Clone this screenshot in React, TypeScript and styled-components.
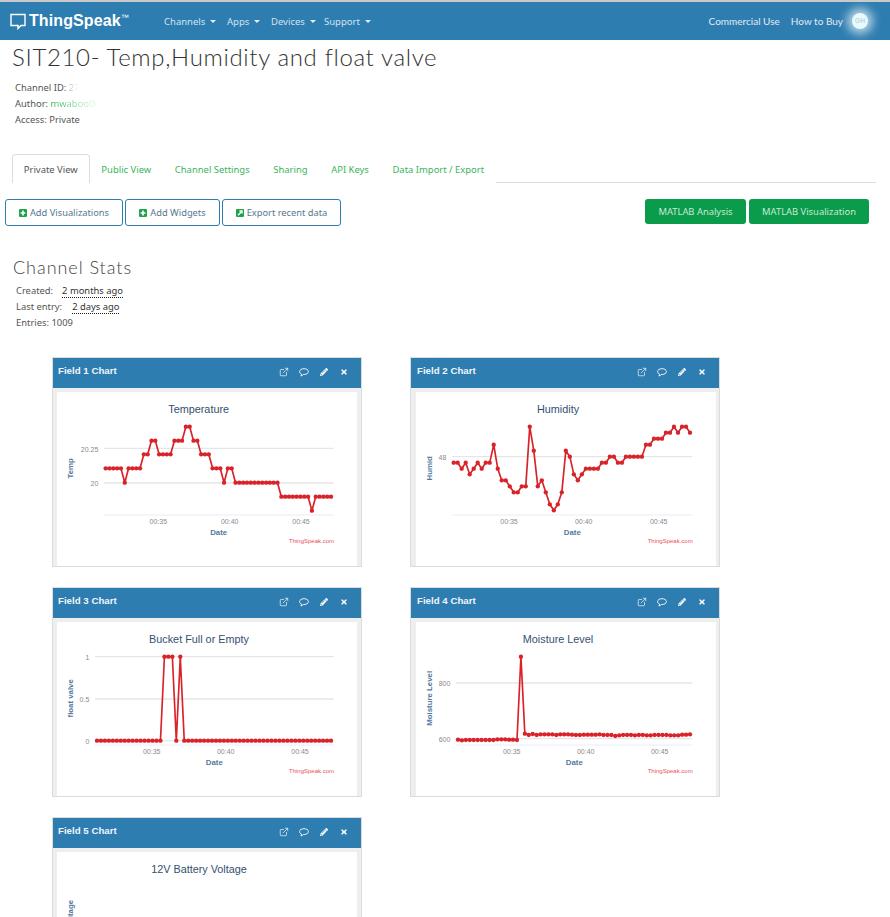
import styled, { createGlobalStyle } from "styled-components";
import { ExternalLink } from "lucide-react";
import { FaPencilAlt, FaTimes } from "react-icons/fa";

const GlobalStyle = createGlobalStyle`
  html, body {
    margin: 0;
    padding: 0;
    height: 917px;
    overflow: hidden;
    background: #fff;
    font-family: "Noto Sans", sans-serif;
  }
`;

const Navbar = styled.nav`
  height: 40px;
  box-sizing: border-box;
  border-top: 2px solid #c9c9c9;
  background: #2e7db1;
  display: flex;
  align-items: center;
  padding: 0 22px 0 10px;
`;
const Brand = styled.div`
  display: flex;
  align-items: center;
  width: 154px;
  color: #fff;
  font: bold 16px "Liberation Sans", sans-serif;
`;
const BrandText = styled.span`
  margin-left: 3px;
  letter-spacing: 0.1px;
`;
const Trademark = styled.span`
  font-size: 8px;
  font-weight: normal;
  margin: -7px 0 0 0;
`;
const NavItem = styled.div<{ $width: number }>`
  width: ${(p) => p.$width}px;
  display: flex;
  align-items: center;
  color: #d3e3ee;
  font-size: 9.5px;
  &::after {
    content: "";
    margin-left: 5px;
    border-top: 3px solid #e4eef5;
    border-left: 3px solid transparent;
    border-right: 3px solid transparent;
  }
`;
const NavRight = styled.div`
  margin-left: auto;
  display: flex;
  align-items: center;
  gap: 11px;
  color: #e0ecf4;
  font: 10px Lato, sans-serif;
`;
const Avatar = styled.div`
  width: 16px;
  height: 16px;
  margin-left: -2px;
  border-radius: 50%;
  background: #e6fbff;
  box-shadow: 0 0 10px 5px rgba(255, 255, 255, 0.65);
  color: #c9d5dc;
  font: bold 7px/16px "Liberation Sans", sans-serif;
  text-align: center;
`;

const Title = styled.h1`
  margin: 0;
  padding-left: 12px;
  color: #333;
  font: 300 24px/34px Lato, sans-serif;
  letter-spacing: 0.65px;
`;
const Meta = styled.div`
  margin-top: 6px;
  padding-left: 15px;
`;
const MetaRow = styled.div`
  height: 16px;
  color: #555;
  font-size: 9.4px;
  line-height: 16px;
`;
const Faded = styled.span<{ $color: string }>`
  background: linear-gradient(to right, ${(p) => p.$color}, transparent);
  -webkit-background-clip: text;
  background-clip: text;
  color: transparent;
`;

const Tabs = styled.div`
  margin: 26px 14px 0 12px;
  height: 29px;
  box-sizing: border-box;
  border-bottom: 1px solid #ddd;
  display: flex;
`;
const Tab = styled.div<{ $active?: boolean }>`
  height: 29px;
  box-sizing: border-box;
  padding: 0 10.8px;
  line-height: 29px;
  font-size: 9.45px;
  white-space: nowrap;
  color: ${(p) => (p.$active ? "#555" : "#3cb55c")};
  background: #fff;
  border: 1px solid ${(p) => (p.$active ? "#ddd" : "transparent")};
  border-bottom: 0;
  border-radius: 4px 4px 0 0;
`;

const Toolbar = styled.div`
  margin-top: 16px;
  padding: 0 21px 0 5px;
  display: flex;
  align-items: flex-start;
`;
const ActionGroup = styled.div`
  display: flex;
  gap: 2px;
`;
const MatlabGroup = styled.div`
  margin-left: auto;
  display: flex;
  gap: 3px;
`;
const OutlineButton = styled.div<{ $width: number }>`
  width: ${(p) => p.$width}px;
  height: 27px;
  box-sizing: border-box;
  border: 1px solid #2e7db1;
  border-radius: 3px;
  display: flex;
  align-items: center;
  justify-content: center;
  gap: 3px;
  color: #55788f;
  font-size: 9.3px;
`;
const GreenButton = styled.div<{ $width: number }>`
  width: ${(p) => p.$width}px;
  height: 25px;
  border-radius: 3px;
  background: #0a9c4a;
  color: #c9e8d6;
  font-size: 9.4px;
  line-height: 25px;
  text-align: center;
`;

const StatsHeading = styled.h2`
  margin: 29px 0 0;
  padding-left: 13px;
  color: #444;
  font: 300 18px/24px Lato, sans-serif;
  letter-spacing: 0.95px;
`;
const Stats = styled.div`
  margin-top: 4px;
  padding-left: 16px;
`;
const When = styled.span<{ $gap: number }>`
  margin-left: ${(p) => p.$gap}px;
  color: #333;
  border-bottom: 1px dotted #222;
`;

const ChartGrid = styled.div`
  margin-top: 26px;
  padding-left: 52px;
  display: grid;
  grid-template-columns: 310px 310px;
  column-gap: 48px;
  row-gap: 20px;
`;
const Card = styled.section`
  height: 210px;
  box-sizing: border-box;
  border: 1px solid #dcdcdc;
  background: #eee;
  display: flex;
  flex-direction: column;
`;
const CardHeader = styled.header<{ $left: number }>`
  height: 30px;
  box-sizing: border-box;
  flex: none;
  background: #2e7db1;
  display: flex;
  align-items: flex-start;
  padding: 7px 7.5px 0 ${(p) => p.$left}px;
  color: #fff;
`;
const CardTitle = styled.div`
  font: bold 9.7px/12px "Liberation Sans", sans-serif;
  color: #eef5fa;
`;
const CardIcons = styled.div`
  margin-left: auto;
  display: grid;
  grid-template-columns: repeat(4, 20px);
  justify-items: center;
  align-items: center;
  height: 14px;
`;
const CardBody = styled.div<{ $left: number; $right: number }>`
  flex: 1;
  min-height: 0;
  padding: 4px ${(p) => p.$right}px 0 ${(p) => p.$left}px;
`;
const ChartFrame = styled.div`
  height: 100%;
  background: #fff;
`;
const ChartSvg = styled.svg`
  display: block;
  width: 300px;
  height: 174px;
  font-family: "Liberation Sans", sans-serif;
`;

type Axis = { label: string; y: number };
type ChartProps = {
  field: number;
  right?: boolean;
  title: string;
  titleX: number;
  yLabel: string;
  plotLeft?: number;
  plotRight?: number;
  labelRight?: number;
  grid?: Axis[];
  ticks?: number[];
  dateX?: number;
  xs?: [number, number];
  ys?: number[];
};

// runs of [y, count]
const expand = (runs: [number, number][]) =>
  runs.flatMap(([y, n]) => Array.from({ length: n }, () => y));

const temperature = expand([
  [340, 5], [383, 1], [340, 4], [298, 2], [257, 2], [298, 4], [257, 3], [215, 2], [257, 2],
  [298, 3], [340, 3], [383, 1], [340, 2], [383, 12], [425, 8], [467, 1], [425, 5],
]);
const humidity = [
  323, 323, 341, 323, 358, 341, 323, 341, 323, 323, 269, 341, 376, 376, 394, 412, 412, 394, 394, 215,
  287, 394, 376, 412, 448, 466, 448, 412, 287, 305, 358, 376, 358, 341, 341, 341, 341, 323, 323, 305,
  305, 323, 323, 305, 305, 305, 305, 305, 269, 269, 251, 251, 251, 233, 233, 215, 233, 215, 215, 233,
];
const floatValve = expand([[467, 17], [215, 3], [467, 1], [215, 1], [467, 38]]);
const moisture = [
  464, 466, 465, 465, 465, 465, 465, 465, 465, 465, 463, 463, 463, 464, 464, 465, 215, 446, 450, 447,
  450, 448, 448, 448, 448, 450, 448, 448, 448, 449, 450, 450, 449, 449, 449, 449, 448, 450, 450, 450,
  453, 451, 450, 450, 450, 451, 450, 450, 451, 451, 450, 450, 450, 450, 451, 451, 451, 449, 449, 448,
];

function CommentIcon() {
  return (
    <svg width="10" height="9" viewBox="0 0 10 9">
      <path
        d="M5 0.7 C7.5 0.7 9.4 1.9 9.4 3.6 C9.4 5.3 7.5 6.5 5 6.5 L4.3 6.5 C3.6 7.3 2.8 7.8 1.9 8 C2.3 7.4 2.5 6.8 2.5 6.1 C1.3 5.6 0.6 4.7 0.6 3.6 C0.6 1.9 2.5 0.7 5 0.7 Z"
        fill="none"
        stroke="#fff"
        strokeWidth="0.9"
      />
    </svg>
  );
}

// chart geometry is in units of 1/3 px, measured from the 3x crop of the card
function Chart({
  field, right, title, titleX, yLabel, plotLeft = 0, plotRight = 851, labelRight = 0,
  grid = [], ticks = [], dateX = 0, xs, ys,
}: ChartProps) {
  const originX = right ? 24 : 21;
  const yLabelX = right ? 73 : 70;
  const points = xs && ys
    ? ys.map((y, i) => [xs[0] + ((xs[1] - xs[0]) * i) / (ys.length - 1), y])
    : [];
  return (
    <Card>
      <CardHeader $left={right ? 6 : 5}>
        <CardTitle>Field {field} Chart</CardTitle>
        <CardIcons>
          <ExternalLink size={10} strokeWidth={1.6} />
          <CommentIcon />
          <FaPencilAlt size={8} />
          <FaTimes size={8} />
        </CardIcons>
      </CardHeader>
      <CardBody $left={right ? 5 : 4} $right={right ? 3 : 4}>
        <ChartFrame>
          <ChartSvg viewBox={`${originX} 111 900 522`}>
            <text x={titleX} y={173} textAnchor="middle" fontSize={32.5} fill="#34506f">{title}</text>
            <text
              transform={`translate(${yLabelX} 340) rotate(-90)`}
              textAnchor="middle"
              fontSize={23.5}
              fontWeight="bold"
              fill="#5479a0"
            >
              {yLabel}
            </text>
            {points.length > 0 && (
              <>
                {grid.map((g) => (
                  <g key={g.label}>
                    <line x1={plotLeft} x2={plotRight} y1={g.y} y2={g.y} stroke="#e6e6e6" strokeWidth={4} />
                    <text x={labelRight} y={g.y + 10} textAnchor="end" fontSize={21} fill="#8a8a8a">{g.label}</text>
                  </g>
                ))}
                <line x1={plotLeft} x2={plotRight} y1={480} y2={480} stroke="#e6ecf5" strokeWidth={3} />
                {ticks.map((x, i) => (
                  <text key={x} x={x} y={507} textAnchor="middle" fontSize={21} fill="#8a8a8a">
                    00:{35 + i * 5}
                  </text>
                ))}
                <text x={dateX} y={540} textAnchor="middle" fontSize={23.5} fontWeight="bold" fill="#5479a0">Date</text>
                <text x={plotRight + 1} y={564} textAnchor="end" fontSize={18} fill="#e8505b">ThingSpeak.com</text>
                <polyline
                  points={points.map((p) => p.join(",")).join(" ")}
                  fill="none"
                  stroke="#d8232a"
                  strokeWidth={5}
                  strokeLinejoin="round"
                />
                {points.map(([x, y]) => (
                  <circle key={x} cx={x} cy={y} r={6.5} fill="#d8232a" />
                ))}
              </>
            )}
          </ChartSvg>
        </ChartFrame>
      </CardBody>
    </Card>
  );
}

function SquareIcon({ share }: { share?: boolean }) {
  return (
    <svg width="8" height="8" viewBox="0 0 8 8">
      <rect width="8" height="8" rx="1" fill="#1fa34a" />
      {share ? (
        <path d="M2 6.2 L5 3.2 M3.4 2 H6 V4.6" stroke="#fff" strokeWidth="1.4" fill="none" />
      ) : (
        <path d="M4 1.6 V6.4 M1.6 4 H6.4" stroke="#fff" strokeWidth="1.6" fill="none" />
      )}
    </svg>
  );
}

export default function App() {
  return (
    <>
      <GlobalStyle />
      <Navbar>
        <Brand>
          <svg width="16" height="17" viewBox="0 0 16 17">
            <path d="M1 1.5 H15 V12.5 H11 L8 15.5 V12.5 H1 Z" fill="none" stroke="#fff" strokeWidth="1.4" />
          </svg>
          <BrandText>ThingSpeak</BrandText>
          <Trademark>™</Trademark>
        </Brand>
        <NavItem $width={63}>Channels</NavItem>
        <NavItem $width={44}>Apps</NavItem>
        <NavItem $width={53}>Devices</NavItem>
        <NavItem $width={50}>Support</NavItem>
        <NavRight>
          <span>Commercial Use</span>
          <span>How to Buy</span>
          <Avatar>GH</Avatar>
        </NavRight>
      </Navbar>

      <Title>SIT210- Temp,Humidity and float valve</Title>
      <Meta>
        <MetaRow>Channel ID: <Faded $color="#bbb">27</Faded></MetaRow>
        <MetaRow>Author: <Faded $color="#2fb552">mwaboo00</Faded></MetaRow>
        <MetaRow>Access: Private</MetaRow>
      </Meta>

      <Tabs>
        <Tab $active>Private View</Tab>
        <Tab>Public View</Tab>
        <Tab>Channel Settings</Tab>
        <Tab>Sharing</Tab>
        <Tab>API Keys</Tab>
        <Tab>Data Import / Export</Tab>
      </Tabs>

      <Toolbar>
        <ActionGroup>
          <OutlineButton $width={118}><SquareIcon /> Add Visualizations</OutlineButton>
          <OutlineButton $width={95}><SquareIcon /> Add Widgets</OutlineButton>
          <OutlineButton $width={119}><SquareIcon share /> Export recent data</OutlineButton>
        </ActionGroup>
        <MatlabGroup>
          <GreenButton $width={101}>MATLAB Analysis</GreenButton>
          <GreenButton $width={120}>MATLAB Visualization</GreenButton>
        </MatlabGroup>
      </Toolbar>

      <StatsHeading>Channel Stats</StatsHeading>
      <Stats>
        <MetaRow>Created:<When $gap={9}>2 months ago</When></MetaRow>
        <MetaRow>Last entry:<When $gap={10}>2 days ago</When></MetaRow>
        <MetaRow>Entries: 1009</MetaRow>
      </Stats>

      <ChartGrid>
        <Chart
          field={1} title="Temperature" titleX={446} yLabel="Temp"
          plotLeft={162} labelRight={145} ticks={[325, 539, 753]} dateX={506}
          grid={[{ label: "20.25", y: 280 }, { label: "20", y: 384 }]}
          xs={[167, 843]} ys={temperature}
        />
        <Chart
          field={2} right title="Humidity" titleX={450} yLabel="Humid"
          plotLeft={132} plotRight={853} labelRight={115} ticks={[303, 527, 752]} dateX={493}
          grid={[{ label: "48", y: 305 }]}
          xs={[137, 846]} ys={humidity}
        />
        <Chart
          field={3} title="Bucket Full or Empty" titleX={447} yLabel="float valve"
          plotLeft={135} labelRight={118} ticks={[305, 527, 750]} dateX={493}
          grid={[{ label: "1", y: 215 }, { label: "0.5", y: 342 }, { label: "0", y: 467 }]}
          xs={[141, 843]} ys={floatValve}
        />
        <Chart
          field={4} right title="Moisture Level" titleX={450} yLabel="Moisture Level"
          plotLeft={144} plotRight={853} labelRight={127} ticks={[311, 533, 755]} dateX={499}
          grid={[{ label: "800", y: 294 }, { label: "600", y: 461 }]}
          xs={[150, 846]} ys={moisture}
        />
        <Chart field={5} title="12V Battery Voltage" titleX={447} yLabel="Battery Voltage" />
      </ChartGrid>
    </>
  );
}
